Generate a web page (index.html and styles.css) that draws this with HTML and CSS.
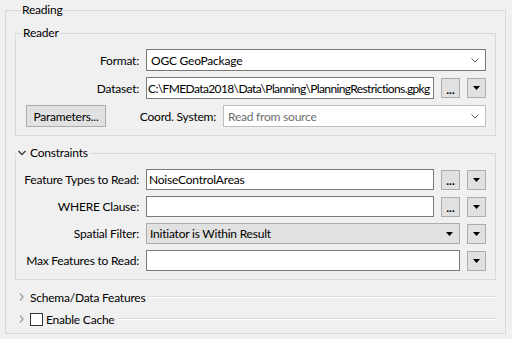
FILE: index.html
```html
<!DOCTYPE html>
<html lang="en">
<head>
    <meta charset="UTF-8">
    <meta name="viewport" content="width=device-width, initial-scale=1.0">
    <title>Reader Parameters</title>
    <link rel="stylesheet" href="styles.css">
</head>
<body>
    <fieldset class="group outer">
        <legend>Reading</legend>

        <fieldset class="group reader">
            <legend>Reader</legend>
            <div class="form-grid tall">
                <label class="field-label">Format:</label>
                <div class="combo span-3">
                    <span>OGC GeoPackage</span>
                    <svg width="8" height="5" viewBox="0 0 8 5"><path d="M0.5 0.5 L4 4 L7.5 0.5" fill="none" stroke="#606060"/></svg>
                </div>

                <label class="field-label">Dataset:</label>
                <div class="text-field path">C:\FMEData2018\Data\Planning\PlanningRestrictions.gpkg</div>
                <button class="mini-btn dots">...</button>
                <button class="mini-btn"><svg width="7" height="4" viewBox="0 0 7 4"><path d="M0 0 H7 L3.5 4 Z" fill="#000"/></svg></button>

                <div class="param-row">
                    <button class="btn">Parameters...</button>
                    <label class="field-label grow">Coord. System:</label>
                    <div class="combo disabled coord">
                        <span>Read from source</span>
                        <svg width="8" height="5" viewBox="0 0 8 5"><path d="M0.5 0.5 L4 4 L7.5 0.5" fill="none" stroke="#606060"/></svg>
                    </div>
                </div>
            </div>
        </fieldset>

        <fieldset class="group section">
            <legend>
                <svg width="8" height="6" viewBox="0 0 8 6"><path d="M0.5 1 L4 4.5 L7.5 1" fill="none" stroke="#404040" stroke-width="1.4"/></svg>
                <span>Constraints</span>
            </legend>
            <div class="form-grid">
                <label class="field-label">Feature Types to Read:</label>
                <div class="text-field">NoiseControlAreas</div>
                <button class="mini-btn dots">...</button>
                <button class="mini-btn"><svg width="7" height="4" viewBox="0 0 7 4"><path d="M0 0 H7 L3.5 4 Z" fill="#000"/></svg></button>

                <label class="field-label">WHERE Clause:</label>
                <div class="text-field"></div>
                <button class="mini-btn dots">...</button>
                <button class="mini-btn"><svg width="7" height="4" viewBox="0 0 7 4"><path d="M0 0 H7 L3.5 4 Z" fill="#000"/></svg></button>

                <label class="field-label">Spatial Filter:</label>
                <div class="combo flat span-2">
                    <span>Initiator is Within Result</span>
                    <svg width="7" height="4" viewBox="0 0 7 4"><path d="M0 0 H7 L3.5 4 Z" fill="#000"/></svg>
                </div>
                <button class="mini-btn"><svg width="7" height="4" viewBox="0 0 7 4"><path d="M0 0 H7 L3.5 4 Z" fill="#000"/></svg></button>

                <label class="field-label">Max Features to Read:</label>
                <div class="text-field span-2"></div>
                <button class="mini-btn"><svg width="7" height="4" viewBox="0 0 7 4"><path d="M0 0 H7 L3.5 4 Z" fill="#000"/></svg></button>
            </div>
        </fieldset>

        <div class="collapsed-row first">
            <svg class="expander" width="5" height="8" viewBox="0 0 5 8"><path d="M1 0.5 L4 4 L1 7.5" fill="none" stroke="#a0a0a0" stroke-width="1.3"/></svg>
            <span>Schema/Data Features</span>
            <span class="rule"></span>
        </div>
        <div class="collapsed-row">
            <svg class="expander" width="5" height="8" viewBox="0 0 5 8"><path d="M1 0.5 L4 4 L1 7.5" fill="none" stroke="#a0a0a0" stroke-width="1.3"/></svg>
            <span class="checkbox"></span>
            <span>Enable Cache</span>
            <span class="rule"></span>
        </div>
    </fieldset>
</body>
</html>
```

FILE: styles.css
```css
body {
    margin: 0;
    background: #f0f0f0;
    font-family: 'Segoe UI', Lato, 'Liberation Sans', sans-serif;
    font-size: 12px;
    letter-spacing: -0.22px;
    color: #000;
}

button {
    font: inherit;
    color: inherit;
    letter-spacing: inherit;
}

/* Group boxes */
.group {
    border: 1px solid #d9d9d9;
    margin: 0;
    padding: 0;
    min-width: 0;
}

.group > legend {
    margin-left: 6px;
    padding: 0 1px;
    line-height: 14px;
}

.outer {
    margin: 3px 6px 5px 5px;
    padding: 0 9px 6px;
}

.reader {
    margin-top: 9px;
    padding: 9px 9px 8px 0;
}

.section {
    margin-top: 10px;
    padding: 9px 9px 8px 0;
}

.section > legend {
    margin-left: 0;
    padding: 0 2px;
    display: flex;
    align-items: center;
    gap: 4px;
}

/* Form rows */
.form-grid {
    display: grid;
    grid-template-columns: 123px 288px 19px 19px;
    grid-auto-rows: 21px;
    column-gap: 7px;
    row-gap: 6px;
}

.form-grid.tall {
    grid-auto-rows: 22px;
}

.field-label {
    text-align: right;
    align-self: center;
    white-space: nowrap;
}

.span-2 { grid-column: span 2; }
.span-3 { grid-column: span 3; }

.param-row {
    grid-column: 1 / -1;
    display: flex;
    align-items: center;
}

.grow {
    flex: 1;
    margin-right: 7px;
}

.btn {
    margin-left: 10px;
    width: 80px;
    height: 22px;
    padding: 0;
    background: #e1e1e1;
    border: 1px solid #adadad;
}

/* Inputs */
.text-field,
.combo {
    box-sizing: border-box;
    background: #fff;
    border: 1px solid #7a7a7a;
    display: flex;
    align-items: center;
    white-space: nowrap;
    overflow: hidden;
}

.text-field {
    padding: 0 2px;
}

.text-field.path {
    padding: 0 1px;
    letter-spacing: -0.62px;
}

.combo {
    justify-content: space-between;
    padding: 0 6px 0 4px;
}

.combo.disabled {
    border-color: #bfbfbf;
    color: #6d6d6d;
}

.combo.coord {
    width: 263px;
    height: 22px;
}

.combo.flat {
    background: #e1e1e1;
    border-color: #adadad;
    padding: 0 6px 0 3px;
}

.mini-btn {
    box-sizing: border-box;
    width: 19px;
    height: 20px;
    align-self: center;
    padding: 0;
    background: #e1e1e1;
    border: 1px solid #adadad;
    display: flex;
    align-items: center;
    justify-content: center;
}

.mini-btn.dots {
    font-weight: bold;
    line-height: 1;
    padding-top: 3px;
    letter-spacing: 0;
}

/* Collapsed sections */
.collapsed-row {
    display: flex;
    align-items: center;
    height: 16px;
    margin-top: 6px;
}

.collapsed-row.first {
    margin-top: 9px;
}

.expander {
    margin: 0 6px 0 4px;
}

.checkbox {
    box-sizing: border-box;
    width: 13px;
    height: 13px;
    background: #fff;
    border: 1px solid #333;
    margin-right: 3px;
}

.rule {
    flex: 1;
    height: 0;
    margin-left: 3px;
    border-top: 1px solid #dcdcdc;
    border-bottom: 1px solid #fff;
}
```
